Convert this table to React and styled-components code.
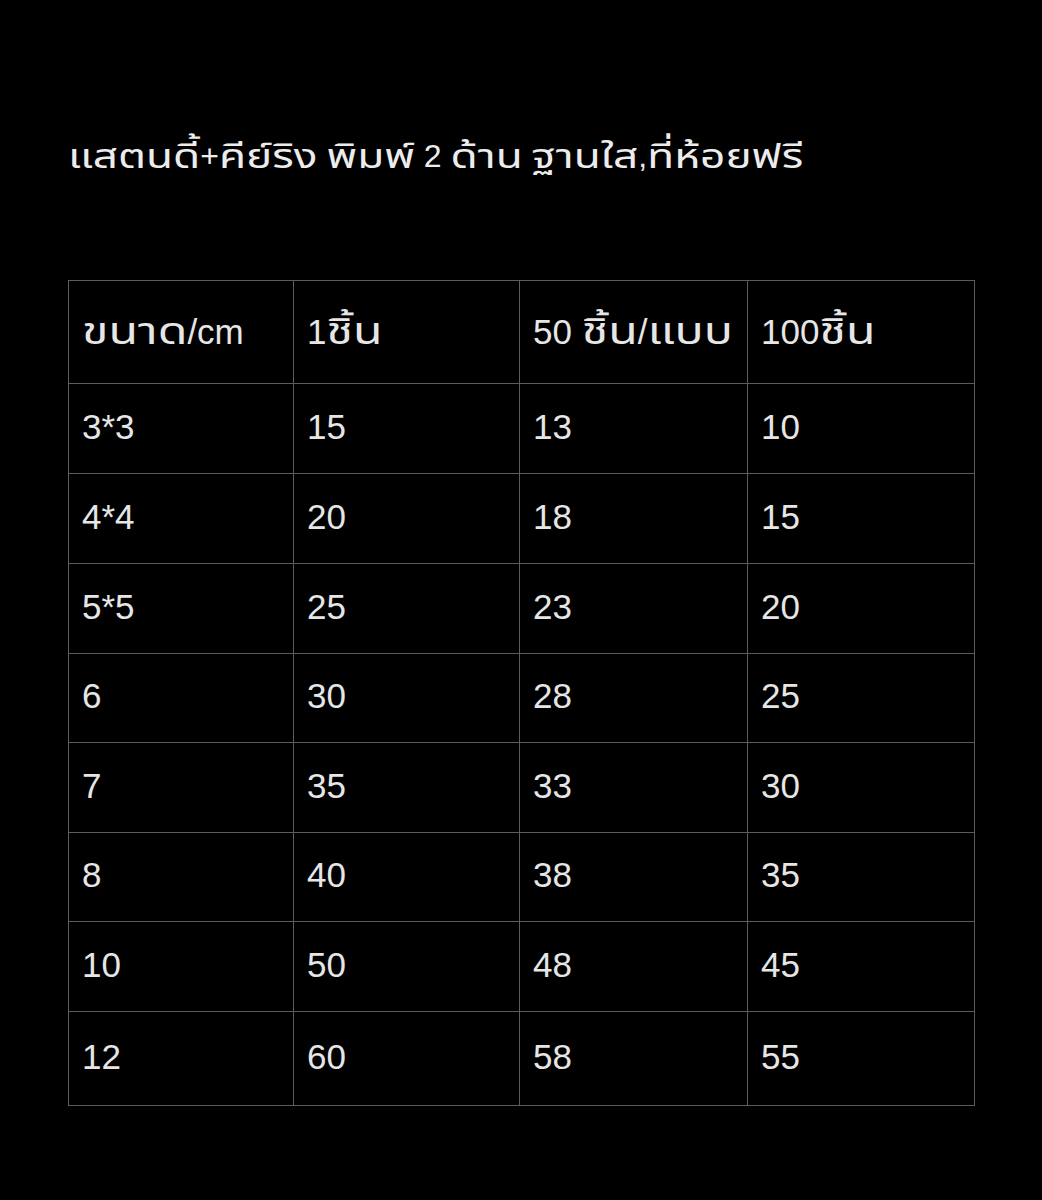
import React from 'react';
import styled, { createGlobalStyle } from 'styled-components';

const GlobalStyle = createGlobalStyle`
  html, body {
    margin: 0;
    padding: 0;
    background: #000;
  }
  body {
    font-family: "Liberation Sans", "Noto Sans Thai", "Noto Sans", "DejaVu Sans", sans-serif;
    color: #e8e8e8;
  }
`;

const Page = styled.div`
  width: 1042px;
  height: 1200px;
  background: #000;
  padding: 130px 0 0 68px;
  box-sizing: border-box;
`;

const Title = styled.h1`
  margin: 0;
  height: 44px;
  font-size: 32px;
  font-weight: 400;
  line-height: 44px;
  color: #ececec;
  white-space: nowrap;
`;

// the reference Thai face is much wider than the local one: draw it larger and squash it back down
const Thai = styled.span`
  display: inline-block;
  font-size: 1.38em;
  line-height: 1;
  transform: scaleY(0.78);
  transform-origin: left 0.89em;
`;

const PriceTable = styled.table`
  margin-top: 106px;
  width: 906px;
  border-collapse: collapse;
  table-layout: fixed;
`;

const Cell = styled.td`
  border: 1px solid #5c5c5c;
  height: ${p => p.$h}px;
  padding: ${p => (p.$head ? '22px 0 0 13px' : '0 0 4px 13px')};
  vertical-align: ${p => (p.$head ? 'top' : 'middle')};
  text-align: left;
  font-weight: 400;
  font-size: 35px;
  line-height: 44px;
  color: #e6e6e6;
  box-sizing: border-box;
  white-space: nowrap;
`;

const header = [
  <><Thai>ขนาด</Thai>/cm</>,
  <>1<Thai>ชิ้น</Thai></>,
  <>50 <Thai>ชิ้น</Thai>/<Thai>แบบ</Thai></>,
  <>100<Thai>ชิ้น</Thai></>,
];

const rows = [
  ['3*3', '15', '13', '10'],
  ['4*4', '20', '18', '15'],
  ['5*5', '25', '23', '20'],
  ['6', '30', '28', '25'],
  ['7', '35', '33', '30'],
  ['8', '40', '38', '35'],
  ['10', '50', '48', '45'],
  ['12', '60', '58', '55'],
];

const rowHeights = [90, 90, 90, 89, 90, 89, 90, 94];
const colWidths = [225, 226, 228, 227];

export default function App() {
  return (
    <>
      <GlobalStyle />
      <Page>
        <Title>
          <Thai>แสตนดี้</Thai>+<Thai>คีย์ริง</Thai> <Thai>พิมพ์</Thai> 2 <Thai>ด้าน</Thai>{' '}
          <Thai>ฐานใส</Thai>,<Thai>ที่ห้อยฟรี</Thai>
        </Title>
        <PriceTable>
          <colgroup>
            {colWidths.map((w, i) => (
              <col key={i} style={{ width: w }} />
            ))}
          </colgroup>
          <thead>
            <tr>
              {header.map((h, i) => (
                <Cell as="th" key={i} $head $h={103}>
                  {h}
                </Cell>
              ))}
            </tr>
          </thead>
          <tbody>
            {rows.map((r, i) => (
              <tr key={r[0]}>
                {r.map((v, j) => (
                  <Cell key={j} $h={rowHeights[i]}>
                    {v}
                  </Cell>
                ))}
              </tr>
            ))}
          </tbody>
        </PriceTable>
      </Page>
    </>
  );
}
